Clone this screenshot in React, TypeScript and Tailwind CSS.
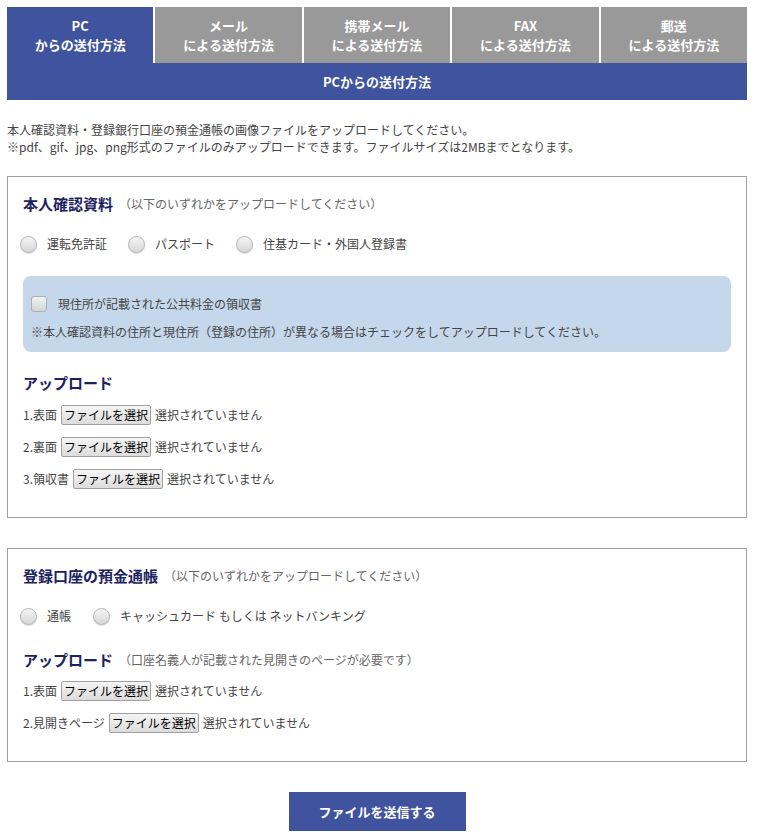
import React from "react";

const font = { fontFamily: '"Noto Sans CJK JP", "Noto Sans", sans-serif' };

function Radio({ label }: { label: string }) {
  return (
    <div className="flex items-center">
      <span className="w-[17px] h-[17px] rounded-full border border-[#b4b4b4] bg-gradient-to-b from-[#f6f6f6] to-[#d6d6d6] shadow-[0_1px_1px_rgba(0,0,0,0.15)]" />
      <span className="ml-[10px] text-[12px] text-[#444]">{label}</span>
    </div>
  );
}

function FileRow({ label }: { label: string }) {
  return (
    <div className="h-[22px] flex items-center text-[12px] text-[#444]">
      <span>{label}</span>
      <span className="ml-[4px] h-[20px] px-[2px] flex items-center border border-[#a0a0a0] rounded-[2px] bg-gradient-to-b from-[#f5f5f5] to-[#dcdcdc] text-[12px] text-black">
        ファイルを選択
      </span>
      <span className="ml-[4px]">選択されていません</span>
    </div>
  );
}

const tabs = [
  ["PC", "からの送付方法"],
  ["メール", "による送付方法"],
  ["携帯メール", "による送付方法"],
  ["FAX", "による送付方法"],
  ["郵送", "による送付方法"],
];

export default function App() {
  return (
    <div className="bg-white p-[7px] w-[754px]" style={font}>
      <div className="flex gap-[2px]">
        {tabs.map((t, i) => (
          <div
            key={i}
            className={`flex-1 h-[56px] flex flex-col items-center justify-center text-[13px] font-bold leading-[19px] text-white ${
              i === 0 ? "bg-[#3f539e]" : "bg-[#999999]"
            }`}
          >
            <span>{t[0]}</span>
            <span>{t[1]}</span>
          </div>
        ))}
      </div>
      <div className="h-[37px] bg-[#3f539e] flex items-center justify-center text-white text-[13px] font-bold">
        PCからの送付方法
      </div>

      <div className="mt-[21px] text-[12px] leading-[17px] text-[#444]">
        <p>本人確認資料・登録銀行口座の預金通帳の画像ファイルをアップロードしてください。</p>
        <p>※pdf、gif、jpg、png形式のファイルのみアップロードできます。ファイルサイズは2MBまでとなります。</p>
      </div>

      <div className="mt-[21px] border border-[#a0a0a0] px-[15px] pt-[17px] pb-[27px]">
        <div className="h-[20px] flex items-center">
          <span className="text-[15px] font-bold text-[#1c2260]">本人確認資料</span>
          <span className="ml-[6px] text-[12px] text-[#666]">（以下のいずれかをアップロードしてください）</span>
        </div>
        <div className="mt-[20px] h-[20px] flex items-center gap-[21px] -ml-[3px]">
          <Radio label="運転免許証" />
          <Radio label="パスポート" />
          <Radio label="住基カード・外国人登録書" />
        </div>
        <div className="mt-[22px] h-[76px] rounded-[8px] bg-[#c5d7eb] pl-[8px] pt-[18px]">
          <div className="h-[20px] flex items-center">
            <span className="w-[16px] h-[16px] rounded-[3px] border border-[#b0b0b0] bg-gradient-to-b from-[#f2f2f2] to-[#d4d4d4]" />
            <span className="ml-[11px] text-[12px] text-[#444]">現住所が記載された公共料金の領収書</span>
          </div>
          <div className="mt-[8px] h-[20px] flex items-center text-[12px] text-[#444]">
            ※本人確認資料の住所と現住所（登録の住所）が異なる場合はチェックをしてアップロードしてください。
          </div>
        </div>
        <div className="mt-[21px] h-[20px] flex items-center text-[15px] font-bold text-[#1c2260]">
          アップロード
        </div>
        <div className="mt-[11px] flex flex-col gap-[10px]">
          <FileRow label="1.表面" />
          <FileRow label="2.裏面" />
          <FileRow label="3.領収書" />
        </div>
      </div>

      <div className="mt-[30px] border border-[#a0a0a0] px-[15px] pt-[17px] pb-[27px]">
        <div className="h-[20px] flex items-center">
          <span className="text-[15px] font-bold text-[#1c2260]">登録口座の預金通帳</span>
          <span className="ml-[6px] text-[12px] text-[#666]">（以下のいずれかをアップロードしてください）</span>
        </div>
        <div className="mt-[20px] h-[20px] flex items-center gap-[22px] -ml-[3px]">
          <Radio label="通帳" />
          <Radio label="キャッシュカード もしくは ネットバンキング" />
        </div>
        <div className="mt-[24px] h-[20px] flex items-center">
          <span className="text-[15px] font-bold text-[#1c2260]">アップロード</span>
          <span className="ml-[6px] text-[12px] text-[#666]">（口座名義人が記載された見開きのページが必要です）</span>
        </div>
        <div className="mt-[10px] flex flex-col gap-[10px]">
          <FileRow label="1.表面" />
          <FileRow label="2.見開きページ" />
        </div>
      </div>

      <div className="mt-[30px] flex justify-center">
        <div className="w-[177px] h-[39px] bg-[#3f539e] flex items-center justify-center text-white text-[13px] font-bold">
          ファイルを送信する
        </div>
      </div>
    </div>
  );
}
